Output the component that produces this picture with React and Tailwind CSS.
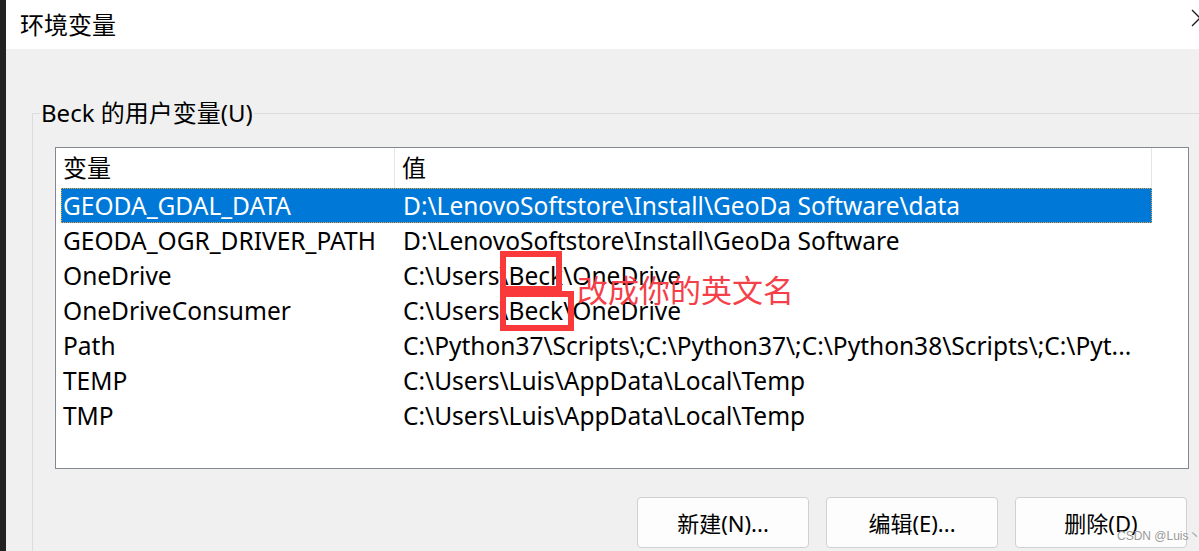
const rows = [
  ["GEODA_GDAL_DATA", "D:\\LenovoSoftstore\\Install\\GeoDa Software\\data"],
  ["GEODA_OGR_DRIVER_PATH", "D:\\LenovoSoftstore\\Install\\GeoDa Software"],
  ["OneDrive", "C:\\Users\\Beck\\OneDrive"],
  ["OneDriveConsumer", "C:\\Users\\Beck\\OneDrive"],
  ["Path", "C:\\Python37\\Scripts\\;C:\\Python37\\;C:\\Python38\\Scripts\\;C:\\Pyt..."],
  ["TEMP", "C:\\Users\\Luis\\AppData\\Local\\Temp"],
  ["TMP", "C:\\Users\\Luis\\AppData\\Local\\Temp"],
];

function Button({ children }) {
  return (
    <button className="w-[172px] h-[51px] rounded-[4px] border border-[#d0d0d0] bg-[#fdfdfd] text-[22px] text-black leading-none">
      {children}
    </button>
  );
}

export default function App() {
  return (
    <div className="relative w-[1199px] h-[551px] overflow-hidden flex bg-[#f0f0f0] font-['Noto_Sans','Noto_Sans_CJK_SC',sans-serif] text-black">
      {/* window edge */}
      <div className="w-[6px] shrink-0 bg-[#222222]" />

      <div className="flex-1 flex flex-col">
        {/* title bar */}
        <div className="h-[49px] shrink-0 bg-white flex items-center pl-[14px]">
          <span className="text-[24px] leading-none">环境变量</span>
        </div>

        {/* user variables group */}
        <fieldset className="mt-[50px] ml-[26px] border-l border-t border-[#dcdcdc] flex-1">
          <legend className="ml-[7px] px-[1px] text-[24px] leading-[28px]">Beck 的用户变量(U)</legend>

          <div className="mt-[20px] ml-[22px] w-[1134px] h-[322px] border border-[#828790] bg-white">
            {/* header */}
            <div className="flex h-[40px] text-[24px] leading-[40px]">
              <div className="w-[339px] pl-[7px] border-r border-[#e5e5e5]">变量</div>
              <div className="w-[757px] pl-[7px] border-r border-[#e5e5e5]">值</div>
            </div>

            {/* rows */}
            <div className="ml-[5px] w-[1091px] text-[24.5px]">
              {rows.map(([name, value], i) => (
                <div
                  key={name}
                  className={
                    i === 0
                      ? "flex h-[35px] leading-[35px] bg-[#0078d7] text-white outline-1 outline-dotted outline-[#e8a33c] -outline-offset-1"
                      : "flex h-[35px] leading-[35px]"
                  }
                >
                  <div className="w-[334px] shrink-0 pl-[2px] whitespace-nowrap">{name}</div>
                  <div className="pl-[8px] whitespace-nowrap">{value}</div>
                </div>
              ))}
            </div>
          </div>

          <div className="mt-[28px] ml-[22px] w-[1132px] flex justify-end gap-[17px]">
            <Button>新建(N)...</Button>
            <Button>编辑(E)...</Button>
            <Button>删除(D)</Button>
          </div>
        </fieldset>
      </div>

      {/* close glyph, cut by the right edge */}
      <svg className="absolute left-[1191px] top-[9px]" width="18" height="18" viewBox="0 0 18 18">
        <path d="M1 1 L17 17 M17 1 L1 17" stroke="#1a1a1a" strokeWidth="1.3" fill="none" />
      </svg>

      {/* red annotation */}
      <div className="absolute left-[500px] top-[251px] w-[62px] h-[41px] border-[6px] border-[#fa3a3a]" />
      <div className="absolute left-[500px] top-[291px] w-[74px] h-[40px] border-[6px] border-[#fa3a3a]" />
      <div className="absolute left-[577px] top-[273px] text-[31px] leading-[35px] text-[#f5404a] whitespace-nowrap">
        改成你的英文名
      </div>

      {/* watermark */}
      <div className="absolute left-[1117px] top-[529px] text-[12px] leading-[15px] text-[#9a9a9a] font-['Liberation_Sans','Noto_Sans_CJK_SC',sans-serif] whitespace-nowrap">
        CSDN @Luis丶
      </div>
    </div>
  );
}
